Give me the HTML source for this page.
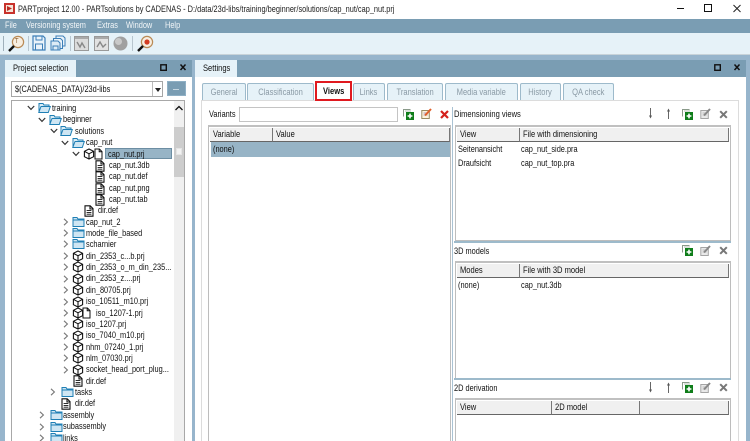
<!DOCTYPE html>
<html><head><meta charset="utf-8"><style>
html,body{margin:0;padding:0;width:750px;height:441px;overflow:hidden;background:#97b5cc}
body{position:relative;font-family:"Liberation Sans",sans-serif;font-size:9px;color:#111}
div,span,svg{position:absolute}
span{white-space:nowrap;line-height:12px;transform:scaleX(.82);transform-origin:0 50%}
i{font-style:normal;display:inline-block;white-space:nowrap}
.tab{background:#e6f2f8;border:1px solid #9dbacb;border-bottom:0;border-radius:2px 2px 0 0;box-sizing:border-box;height:17px;top:83px;color:#8a9aa5;text-align:center;line-height:17px;font-size:9px}
.tab i{transform:scaleX(.84)}
.hd{background:#f0f0f0;border-right:1px solid #777;border-bottom:1px solid #666;box-sizing:border-box;height:14px;padding-left:3px;line-height:13px;font-size:9px}
.hd i{transform:scaleX(.84);transform-origin:0 50%}
.box{background:#fff;border:1px solid #bdbdbd;border-top:2px solid #c0c0c0;box-sizing:border-box}
</style></head><body>
<svg width="0" height="0" style="position:absolute"><defs>
<symbol id="fo" viewBox="0 0 13 12"><path d="M1 3.5V1.5h4l1 1.5h5v2" fill="#d7ebf5" stroke="#1f7fb5"/><path d="M.8 10.5h9.5l2-6H3z" fill="#cfe6f3" stroke="#1f7fb5"/><path d="M1 3v7.5" stroke="#1f7fb5"/></symbol>
<symbol id="fc" viewBox="0 0 13 12"><path d="M1 3V1.5h4l1 1.5h6v7.5H1z" fill="#cfe6f3" stroke="#1f7fb5"/><path d="M1 4h11" stroke="#1f7fb5"/></symbol>
<symbol id="cu" viewBox="0 0 12 12"><path d="M6 1l4.6 2.3v5.4L6 11 1.4 8.7V3.3zM1.4 3.3L6 5.8l4.6-2.5M6 5.8V11" fill="#fff" stroke="#111" stroke-width="1.1"/></symbol>
<symbol id="fi" viewBox="0 0 10 12"><path d="M1 .8h5.2L9 3.6v7.6H1zM6 1v3h3" fill="#fff" stroke="#111" stroke-width="1.1"/><path d="M2.6 5.6h4.8M2.6 7.4h4.8M2.6 9.2h4.8" stroke="#111" stroke-width=".9"/></symbol>
<symbol id="pg" viewBox="0 0 9 12"><path d="M1 1h4.4L8 3.6v7.4H1zM5.2 1v2.8H8" fill="#fff" stroke="#111"/></symbol>
<symbol id="ad" viewBox="0 0 11 11"><path d="M.5 7.5V.5h7" fill="none" stroke="#8a9a8a"/><path d="M2 2h6" stroke="#b5c0b5"/><rect x="3" y="3" width="8" height="8" fill="#0f7d1a"/><path d="M7 4.6v4.8M4.6 7h4.8" stroke="#fff" stroke-width="1.6"/></symbol>
<symbol id="ed" viewBox="0 0 11 11"><rect x=".8" y="2.5" width="7.5" height="8" fill="#e9e9e9" stroke="#a5a5a5"/><path d="M2.5 5h4M2.5 7h4" stroke="#bbb"/><path d="M4 7.5L10 1" stroke="#888" stroke-width="2"/></symbol>
<symbol id="ec" viewBox="0 0 11 11"><rect x=".8" y="2.5" width="7.5" height="8" fill="#fdf4dc" stroke="#9a8a60"/><path d="M2.5 5h4M2.5 7h4" stroke="#a9b"/><path d="M4 7.5L10 1" stroke="#e0602a" stroke-width="2"/></symbol>
<symbol id="xg" viewBox="0 0 9 9"><path d="M1.2 1.2l6.6 6.6M7.8 1.2L1.2 7.8" stroke="#777" stroke-width="2"/></symbol>
<symbol id="dn" viewBox="0 0 5 11"><path d="M2.5 0v9" stroke="#666"/><path d="M1 7.5l1.5 3 1.5-3z" fill="#555"/></symbol>
<symbol id="up" viewBox="0 0 5 11"><path d="M2.5 11V2" stroke="#666"/><path d="M1 3.5l1.5-3 1.5 3z" fill="#555"/></symbol>
<symbol id="cd" viewBox="0 0 8 6"><path d="M.8 1l3.2 3.4L7.2 1" fill="none" stroke="#333" stroke-width="1.2"/></symbol>
<symbol id="cr" viewBox="0 0 6 8"><path d="M1 .8l3.4 3.2L1 7.2" fill="none" stroke="#777" stroke-width="1.1"/></symbol>
<symbol id="lens" viewBox="0 0 18 18"><circle cx="11" cy="7" r="5.6" fill="#f7eee0" stroke="#b98a55" stroke-width="1.2"/><path d="M7 11l-5 5" stroke="#111" stroke-width="2.4"/></symbol>
</defs></svg>

<!-- title bar -->
<div style="left:0;top:0;width:750px;height:19px;background:#fff"></div>
<div style="left:4px;top:3px;width:11px;height:11px;background:#c8322c"></div>
<div style="left:6px;top:5px;width:7px;height:7px;background:#f5e4d8"></div>
<svg style="left:7px;top:6px" width="5" height="5"><path d="M0 0l5 2.5L0 5z" fill="#b82a22"/></svg>
<span style="left:18px;top:3px;color:#222">PARTproject 12.00 - PARTsolutions by CADENAS - D:/data/23d-libs/training/beginner/solutions/cap_nut/cap_nut.prj</span>
<svg style="left:675px;top:4px" width="70" height="10"><path d="M2 4.5h7" stroke="#111"/><rect x="29.5" y=".5" width="7" height="7" fill="none" stroke="#111"/><path d="M58.5 1l7 7M65.5 1l-7 7" stroke="#222"/></svg>

<!-- menu -->
<div style="left:0;top:19px;width:750px;height:14px;background:#7a9db3"></div>
<span style="left:5px;top:19px;color:#f2f6f8">File</span>
<span style="left:26px;top:19px;color:#f2f6f8">Versioning system</span>
<span style="left:97px;top:19px;color:#f2f6f8">Extras</span>
<span style="left:126px;top:19px;color:#f2f6f8">Window</span>
<span style="left:165px;top:19px;color:#f2f6f8">Help</span>

<!-- toolbar -->
<div style="left:0;top:33px;width:750px;height:21px;background:#e6f2f8;border-bottom:1px solid #c8d3d9"></div>
<div style="left:3px;top:36px;width:1px;height:15px;background:#9fb0bb"></div>
<svg style="left:7px;top:35px" width="18" height="18"><use href="#lens"/></svg>
<span style="left:15px;top:36px;font-size:7px;color:#8a5a2a">T</span>
<div style="left:28px;top:36px;width:1px;height:15px;background:#b8c6cf"></div>
<svg style="left:32px;top:35px" width="14" height="16"><path d="M1 1h10l2 2v12H1z" fill="#eaf3fa" stroke="#3c7fb8" stroke-width="1.2"/><path d="M4 1v4h6V1M3.5 9h7v6h-7z" fill="none" stroke="#3c7fb8"/></svg>
<svg style="left:50px;top:35px" width="16" height="16"><path d="M6 1h7l2 2v8H6z" fill="#eaf3fa" stroke="#3c7fb8"/><path d="M3.5 3.5h7l2 2v8h-9z" fill="#eaf3fa" stroke="#3c7fb8"/><path d="M1 6h7l2 2v7H1zM3 11h5v4H3z" fill="#dcebf6" stroke="#3c7fb8"/></svg>
<div style="left:70px;top:36px;width:1px;height:15px;background:#b8c6cf"></div>
<svg style="left:74px;top:36px" width="15" height="15"><rect x=".5" y=".5" width="14" height="14" fill="#dcdcdc" stroke="#999"/><rect x="1" y="1" width="13" height="2" fill="#aaa"/><path d="M3 6l3 5 2-4 3 5" fill="none" stroke="#888" stroke-width="1.4"/></svg>
<svg style="left:94px;top:36px" width="15" height="15"><rect x=".5" y=".5" width="14" height="14" fill="#e2e2e2" stroke="#999"/><rect x="1" y="1" width="13" height="2" fill="#aaa"/><path d="M3 11l3-5 3 5 3-3" fill="none" stroke="#888" stroke-width="1.4"/></svg>
<svg style="left:113px;top:36px" width="15" height="15"><circle cx="7.5" cy="7.5" r="7" fill="#a0a0a0"/><circle cx="5.5" cy="5.5" r="3.5" fill="#c9c9c9"/></svg>
<div style="left:132px;top:36px;width:1px;height:15px;background:#b8c6cf"></div>
<svg style="left:136px;top:35px" width="18" height="18"><use href="#lens"/><circle cx="11" cy="7" r="2.6" fill="#d33c22"/></svg>

<!-- left panel -->
<div style="left:5px;top:60px;width:187px;height:381px;background:#fff"></div>
<div style="left:5px;top:60px;width:71px;height:17px;background:#e6f2f8"></div>
<span style="left:13px;top:62px;transform:scaleX(.84)">Project selection</span>
<div style="left:76px;top:60px;width:116px;height:17px;background:#7a9db3"></div>
<svg style="left:160px;top:64px" width="30" height="9"><rect x=".8" y=".8" width="5.5" height="5.5" fill="none" stroke="#111" stroke-width="1.4"/><path d="M20.5 .5l5 5.5M25.5 .5l-5 5.5" stroke="#111" stroke-width="1.5"/></svg>
<div style="left:11px;top:81px;width:152px;height:16px;background:#fff;border:1px solid #a6a6a6;box-sizing:border-box"></div>
<span style="left:15px;top:83px">$(CADENAS_DATA)/23d-libs</span>
<div style="left:152px;top:82px;width:1px;height:14px;background:#bbb"></div>
<svg style="left:155px;top:88px" width="6" height="4"><path d="M0 0h6L3 4z" fill="#222"/></svg>
<div style="left:167px;top:81px;width:19px;height:15px;background:#7a9db3;border:1px solid #8fb0c5;box-sizing:border-box"></div>
<div style="left:173px;top:89px;width:6px;height:1px;background:#c5d6e0"></div>
<div style="left:11px;top:100px;width:174px;height:341px;border:1px solid #a8a8a8;border-bottom:0;box-sizing:border-box"></div>
<div style="left:174px;top:101px;width:10px;height:340px;background:#f0f0f0"></div>
<div style="left:174px;top:127px;width:10px;height:50px;background:#cdcdcd"></div>
<div style="left:176px;top:148px;width:6px;height:7px;background:#f2f2f2;border:1px solid #e4e4e4;box-sizing:border-box"></div>
<svg style="left:175px;top:105px" width="8" height="6"><path d="M.5 5L4 1.5 7.5 5" fill="none" stroke="#111" stroke-width="1.3"/></svg>

<!-- tree: open folders -->
<svg style="left:27px;top:105px" width="8" height="6"><use href="#cd"/></svg><svg style="left:38px;top:102px" width="13" height="12"><use href="#fo"/></svg><span style="left:52px;top:102px">training</span>
<svg style="left:38px;top:117px" width="8" height="6"><use href="#cd"/></svg><svg style="left:49px;top:114px" width="13" height="12"><use href="#fo"/></svg><span style="left:63px;top:113px">beginner</span>
<svg style="left:50px;top:128px" width="8" height="6"><use href="#cd"/></svg><svg style="left:60px;top:125px" width="13" height="12"><use href="#fo"/></svg><span style="left:75px;top:125px">solutions</span>
<svg style="left:61px;top:140px" width="8" height="6"><use href="#cd"/></svg><svg style="left:72px;top:137px" width="13" height="12"><use href="#fo"/></svg><span style="left:86px;top:136px">cap_nut</span>
<svg style="left:72px;top:151px" width="8" height="6"><use href="#cd"/></svg><svg style="left:83px;top:148px" width="12" height="12"><use href="#cu"/></svg><svg style="left:94px;top:148px" width="9" height="12"><use href="#pg"/></svg>
<div style="left:105px;top:148px;width:67px;height:11px;background:#97b4c6;border:1px solid #6d8ea3;box-sizing:border-box"></div><span style="left:108px;top:148px">cap_nut.prj</span>
<svg style="left:95px;top:160px" width="10" height="12"><use href="#fi"/></svg><span style="left:109px;top:159px">cap_nut.3db</span>
<svg style="left:95px;top:171px" width="10" height="12"><use href="#fi"/></svg><span style="left:109px;top:170px">cap_nut.def</span>
<svg style="left:95px;top:183px" width="10" height="12"><use href="#fi"/></svg><span style="left:109px;top:182px">cap_nut.png</span>
<svg style="left:95px;top:194px" width="10" height="12"><use href="#fi"/></svg><span style="left:109px;top:193px">cap_nut.tab</span>
<svg style="left:84px;top:205px" width="10" height="12"><use href="#fi"/></svg><span style="left:98px;top:204px">dir.def</span>

<svg style="left:63px;top:218px" width="6" height="8"><use href="#cr"/></svg><svg style="left:72px;top:216px" width="13" height="12"><use href="#fc"/></svg><span style="left:86px;top:216px">cap_nut_2</span>
<svg style="left:63px;top:229px" width="6" height="8"><use href="#cr"/></svg><svg style="left:72px;top:227px" width="13" height="12"><use href="#fc"/></svg><span style="left:86px;top:227px">mode_file_based</span>
<svg style="left:63px;top:240px" width="6" height="8"><use href="#cr"/></svg><svg style="left:72px;top:238px" width="13" height="12"><use href="#fc"/></svg><span style="left:86px;top:238px">scharnier</span>
<svg style="left:63px;top:252px" width="6" height="8"><use href="#cr"/></svg><svg style="left:72px;top:250px" width="12" height="12"><use href="#cu"/></svg><span style="left:86px;top:250px">din_2353_c...b.prj</span>
<svg style="left:63px;top:263px" width="6" height="8"><use href="#cr"/></svg><svg style="left:72px;top:261px" width="12" height="12"><use href="#cu"/></svg><span style="left:86px;top:261px">din_2353_o_m_din_235...</span>
<svg style="left:63px;top:275px" width="6" height="8"><use href="#cr"/></svg><svg style="left:72px;top:273px" width="12" height="12"><use href="#cu"/></svg><span style="left:86px;top:272px">din_2353_z....prj</span>
<svg style="left:63px;top:286px" width="6" height="8"><use href="#cr"/></svg><svg style="left:72px;top:284px" width="12" height="12"><use href="#cu"/></svg><span style="left:86px;top:284px">din_80705.prj</span>
<svg style="left:63px;top:298px" width="6" height="8"><use href="#cr"/></svg><svg style="left:72px;top:296px" width="12" height="12"><use href="#cu"/></svg><span style="left:86px;top:295px">iso_10511_m10.prj</span>
<svg style="left:63px;top:309px" width="6" height="8"><use href="#cr"/></svg><svg style="left:72px;top:307px" width="12" height="12"><use href="#cu"/></svg><svg style="left:82px;top:307px" width="9" height="12"><use href="#pg"/></svg><span style="left:96px;top:307px">iso_1207-1.prj</span>
<svg style="left:63px;top:320px" width="6" height="8"><use href="#cr"/></svg><svg style="left:72px;top:318px" width="12" height="12"><use href="#cu"/></svg><span style="left:86px;top:318px">iso_1207.prj</span>
<svg style="left:63px;top:332px" width="6" height="8"><use href="#cr"/></svg><svg style="left:72px;top:330px" width="12" height="12"><use href="#cu"/></svg><span style="left:86px;top:329px">iso_7040_m10.prj</span>
<svg style="left:63px;top:343px" width="6" height="8"><use href="#cr"/></svg><svg style="left:72px;top:341px" width="12" height="12"><use href="#cu"/></svg><span style="left:86px;top:341px">nhm_07240_1.prj</span>
<svg style="left:63px;top:354px" width="6" height="8"><use href="#cr"/></svg><svg style="left:72px;top:352px" width="12" height="12"><use href="#cu"/></svg><span style="left:86px;top:352px">nlm_07030.prj</span>
<svg style="left:63px;top:366px" width="6" height="8"><use href="#cr"/></svg><svg style="left:72px;top:364px" width="12" height="12"><use href="#cu"/></svg><span style="left:86px;top:363px">socket_head_port_plug...</span>
<svg style="left:73px;top:375px" width="10" height="12"><use href="#fi"/></svg><span style="left:86px;top:375px">dir.def</span>
<svg style="left:50px;top:388px" width="6" height="8"><use href="#cr"/></svg><svg style="left:61px;top:386px" width="13" height="12"><use href="#fc"/></svg><span style="left:75px;top:386px">tasks</span>
<svg style="left:61px;top:398px" width="10" height="12"><use href="#fi"/></svg><span style="left:75px;top:397px">dir.def</span>
<svg style="left:39px;top:411px" width="6" height="8"><use href="#cr"/></svg><svg style="left:50px;top:409px" width="13" height="12"><use href="#fc"/></svg><span style="left:63px;top:409px">assembly</span>
<svg style="left:39px;top:423px" width="6" height="8"><use href="#cr"/></svg><svg style="left:50px;top:421px" width="13" height="12"><use href="#fc"/></svg><span style="left:63px;top:420px">subassembly</span>
<svg style="left:39px;top:434px" width="6" height="8"><use href="#cr"/></svg><svg style="left:50px;top:432px" width="13" height="12"><use href="#fc"/></svg><span style="left:63px;top:432px">links</span>

<!-- right panel -->
<div style="left:195px;top:60px;width:551px;height:381px;background:#fff"></div>
<div style="left:195px;top:60px;width:42px;height:17px;background:#e6f2f8"></div>
<span style="left:203px;top:62px;transform:scaleX(.84)">Settings</span>
<div style="left:237px;top:60px;width:509px;height:17px;background:#7a9db3"></div>
<svg style="left:714px;top:64px" width="30" height="9"><rect x=".8" y=".8" width="5.5" height="5.5" fill="none" stroke="#111" stroke-width="1.4"/><path d="M20.5 .5l5 5.5M25.5 .5l-5 5.5" stroke="#111" stroke-width="1.5"/></svg>
<div style="left:738px;top:100px;width:1px;height:341px;background:#dcdcdc"></div>
<div style="left:201px;top:100px;width:538px;height:1px;background:#dcdcdc"></div>
<div style="left:201px;top:100px;width:1px;height:341px;background:#dcdcdc"></div>

<div class="tab" style="left:202px;width:44px"><i>General</i></div>
<div class="tab" style="left:247px;width:67px"><i>Classification</i></div>
<div class="tab" style="left:353px;width:32px"><i>Links</i></div>
<div class="tab" style="left:387px;width:56px"><i>Translation</i></div>
<div class="tab" style="left:445px;width:73px"><i>Media variable</i></div>
<div class="tab" style="left:520px;width:41px"><i>History</i></div>
<div class="tab" style="left:563px;width:51px"><i>QA check</i></div>
<div style="left:315px;top:81px;width:37px;height:20px;background:#fff;border:2px solid #e0191f;box-sizing:border-box;text-align:center;line-height:16px;font-weight:bold;font-size:9px"><i style="transform:scaleX(.84)">Views</i></div>

<!-- variants -->
<span style="left:209px;top:108px">Variants</span>
<div style="left:239px;top:107px;width:159px;height:15px;background:#fff;border:1px solid #c4c4c4;box-sizing:border-box"></div>
<svg style="left:403px;top:109px" width="11" height="11"><use href="#ad"/></svg>
<svg style="left:421px;top:108px" width="11" height="11"><use href="#ec"/></svg>
<svg style="left:440px;top:110px" width="9" height="9"><path d="M1 1l7 7M8 1L1 8" stroke="#d4201c" stroke-width="2.2"/></svg>
<div style="left:452px;top:107px;width:1px;height:334px;background:#a9c2d3"></div>
<div class="box" style="left:208px;top:125px;width:243px;height:316px;border-bottom:0"></div>
<div class="hd" style="left:210px;top:128px;width:63px"><i>Variable</i></div>
<div class="hd" style="left:273px;top:128px;width:177px"><i>Value</i></div>
<div style="left:211px;top:142px;width:239px;height:15px;background:#97b4c6"></div>
<span style="left:213px;top:143px">(none)</span>

<!-- dimensioning -->
<span style="left:454px;top:108px;transform:scaleX(.84)">Dimensioning views</span>
<svg style="left:648px;top:108px" width="5" height="11"><use href="#dn"/></svg>
<svg style="left:666px;top:108px" width="5" height="11"><use href="#up"/></svg>
<svg style="left:682px;top:109px" width="11" height="11"><use href="#ad"/></svg>
<svg style="left:700px;top:108px" width="11" height="11"><use href="#ed"/></svg>
<svg style="left:719px;top:110px" width="9" height="9"><use href="#xg"/></svg>
<div class="box" style="left:455px;top:125px;width:276px;height:116px"></div>
<div class="hd" style="left:457px;top:128px;width:63px"><i>View</i></div>
<div class="hd" style="left:520px;top:128px;width:209px"><i>File with dimensioning</i></div>
<span style="left:458px;top:143px">Seitenansicht</span><span style="left:521px;top:143px">cap_nut_side.pra</span>
<span style="left:458px;top:157px">Draufsicht</span><span style="left:521px;top:157px">cap_nut_top.pra</span>

<!-- 3d -->
<div style="left:454px;top:241px;width:277px;height:2px;background:#9dbacb"></div>
<span style="left:454px;top:245px">3D models</span>
<svg style="left:682px;top:245px" width="11" height="11"><use href="#ad"/></svg>
<svg style="left:700px;top:245px" width="11" height="11"><use href="#ed"/></svg>
<svg style="left:719px;top:246px" width="9" height="9"><use href="#xg"/></svg>
<div class="box" style="left:455px;top:261px;width:276px;height:118px"></div>
<div class="hd" style="left:457px;top:264px;width:63px"><i>Modes</i></div>
<div class="hd" style="left:520px;top:264px;width:209px"><i>File with 3D model</i></div>
<span style="left:458px;top:279px">(none)</span><span style="left:521px;top:279px">cap_nut.3db</span>

<!-- 2d -->
<div style="left:454px;top:378px;width:277px;height:2px;background:#9dbacb"></div>
<span style="left:454px;top:382px">2D derivation</span>
<svg style="left:648px;top:382px" width="5" height="11"><use href="#dn"/></svg>
<svg style="left:666px;top:382px" width="5" height="11"><use href="#up"/></svg>
<svg style="left:682px;top:382px" width="11" height="11"><use href="#ad"/></svg>
<svg style="left:700px;top:382px" width="11" height="11"><use href="#ed"/></svg>
<svg style="left:719px;top:383px" width="9" height="9"><use href="#xg"/></svg>
<div class="box" style="left:455px;top:398px;width:276px;height:43px;border-bottom:0"></div>
<div class="hd" style="left:457px;top:401px;width:95px"><i>View</i></div>
<div class="hd" style="left:552px;top:401px;width:88px"><i>2D model</i></div>
<div class="hd" style="left:640px;top:401px;width:89px"></div>
</body></html>
